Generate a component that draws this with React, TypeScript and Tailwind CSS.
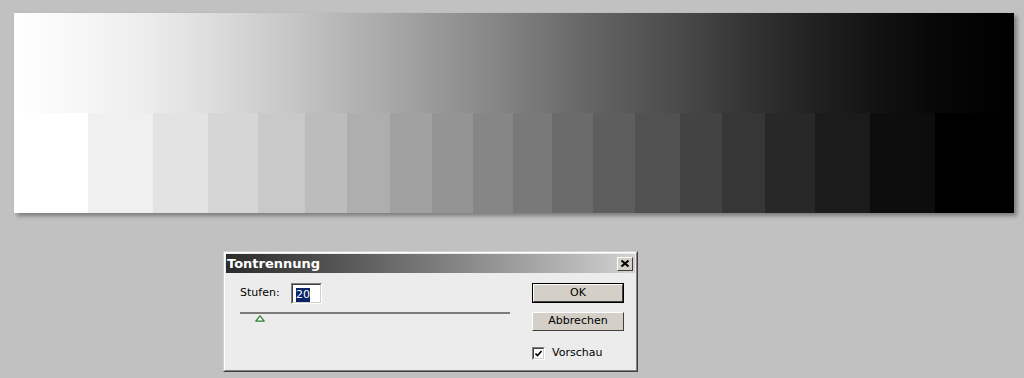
import React from "react"

// Stufen der Tontrennung (20 Stufen, von Weiß nach Schwarz)
const bands = [
  { w: "w-[74px]", bg: "bg-[#ffffff]" },
  { w: "w-[65px]", bg: "bg-[#f0f0f0]" },
  { w: "w-[55px]", bg: "bg-[#e3e3e3]" },
  { w: "w-[50px]", bg: "bg-[#d6d6d6]" },
  { w: "w-[47px]", bg: "bg-[#c9c9c9]" },
  { w: "w-[42px]", bg: "bg-[#bcbcbc]" },
  { w: "w-[43px]", bg: "bg-[#aeaeae]" },
  { w: "w-[42px]", bg: "bg-[#a1a1a1]" },
  { w: "w-[41px]", bg: "bg-[#949494]" },
  { w: "w-[40px]", bg: "bg-[#868686]" },
  { w: "w-[39px]", bg: "bg-[#797979]" },
  { w: "w-[41px]", bg: "bg-[#6b6b6b]" },
  { w: "w-[42px]", bg: "bg-[#5e5e5e]" },
  { w: "w-[45px]", bg: "bg-[#515151]" },
  { w: "w-[42px]", bg: "bg-[#434343]" },
  { w: "w-[43px]", bg: "bg-[#363636]" },
  { w: "w-[50px]", bg: "bg-[#282828]" },
  { w: "w-[55px]", bg: "bg-[#1b1b1b]" },
  { w: "w-[65px]", bg: "bg-[#0d0d0d]" },
  { w: "flex-1", bg: "bg-[#000000]" },
]

const raised =
  "border border-t-white border-l-white border-r-[#404040] border-b-[#404040]"

export default function App() {
  return (
    <div className="w-full h-[378px] bg-[#c1c1c1] pt-[13px] pl-[14px] overflow-hidden font-['DejaVu_Sans',sans-serif] text-black">
      {/* Bild: Verlauf oben, Stufen unten */}
      <div className="w-[1000px] h-[200px] flex flex-col shadow-[3px_3px_4px_rgba(0,0,0,0.35)]">
        <div className="h-[100px] bg-[linear-gradient(to_right,#ffffff_0%,#fbfbfb_3%,#f6f6f6_7.4%,#ebebeb_13.9%,#dedede_19.4%,#d0d0d0_24.4%,#c2c2c2_29.1%,#b5b5b5_33.3%,#a8a8a8_37.6%,#9a9a9a_41.8%,#8d8d8d_45.9%,#808080_49.9%,#727272_53.8%,#646464_57.9%,#575757_62.1%,#4a4a4a_66.6%,#3c3c3c_70.8%,#2f2f2f_75.1%,#212121_80.1%,#141414_85.6%,#070707_92.1%,#000000_100%)]" />
        <div className="h-[100px] flex">
          {bands.map((b, i) => (
            <div key={i} className={`${b.w} ${b.bg} h-full`} />
          ))}
        </div>
      </div>

      {/* Dialog Tontrennung */}
      <div className="mt-[38px] ml-[209px] w-[415px] h-[121px] border border-t-[#d4d0c8] border-l-[#d4d0c8] border-r-[#404040] border-b-[#404040]">
        <div className="h-full flex flex-col border border-t-white border-l-white border-r-[#808080] border-b-[#808080] bg-[#ececec] p-px">
          <div className="h-[19px] flex items-center justify-between bg-linear-to-r from-[#2c2c2c] via-[#7a7a7a] to-[#d2d2d2] pl-px pr-[2px]">
            <span className="text-white font-bold text-[13px] leading-none">Tontrennung</span>
            <div className={`w-[16px] h-[14px] bg-[#d4d0c8] ${raised} flex items-center justify-center`}>
              <svg width="8" height="7" viewBox="0 0 8 7">
                <path d="M0.5 0.5 L7.5 6.5 M7.5 0.5 L0.5 6.5" stroke="#000" strokeWidth="2" />
              </svg>
            </div>
          </div>

          <div className="flex-1 flex text-[11px]">
            <div className="pl-[14px] pt-[10px] w-[306px]">
              <div className="flex items-center h-[21px]">
                <span className="w-[51px]">Stufen:</span>
                <div className="w-[31px] h-[21px] bg-white border border-t-[#808080] border-l-[#808080] border-r-white border-b-white">
                  <div className="h-full border border-t-[#404040] border-l-[#404040] border-r-[#d4d0c8] border-b-[#d4d0c8] pl-[3px] pt-[2px]">
                    <span className="bg-[#0a246a] text-white text-[11px] leading-[14px] inline-block">20</span>
                  </div>
                </div>
              </div>
              <div className="mt-[8px] w-[270px] h-[2px] bg-[#7c7c7c]" />
              <svg className="ml-[15px] mt-[1px] block" width="10" height="7" viewBox="0 0 10 7">
                <path d="M5 0.8 L9.2 6.2 L0.8 6.2 Z" fill="#f4fff4" stroke="#2e7d32" strokeWidth="1.2" strokeLinejoin="round" />
              </svg>
            </div>

            <div className="w-[92px] pt-[10px] flex flex-col">
              <div className="h-[20px] border border-black">
                <div className={`h-full bg-[#d4d0c8] ${raised} flex items-center justify-center`}>OK</div>
              </div>
              <div className={`mt-[9px] h-[19px] bg-[#d4d0c8] ${raised} flex items-center justify-center`}>Abbrechen</div>
              <div className="mt-[14px] flex items-center gap-[7px]">
                <div className="w-[13px] h-[13px] bg-white border border-t-[#808080] border-l-[#808080] border-r-white border-b-white">
                  <div className="h-full border border-t-[#404040] border-l-[#404040] border-r-[#d4d0c8] border-b-[#d4d0c8] flex items-center justify-center">
                    <svg width="7" height="7" viewBox="0 0 7 7">
                      <path d="M0.5 3.5 L2.5 5.5 L6.5 1" stroke="#000" strokeWidth="1.6" fill="none" />
                    </svg>
                  </div>
                </div>
                <span>Vorschau</span>
              </div>
            </div>
          </div>
        </div>
      </div>
    </div>
  )
}
